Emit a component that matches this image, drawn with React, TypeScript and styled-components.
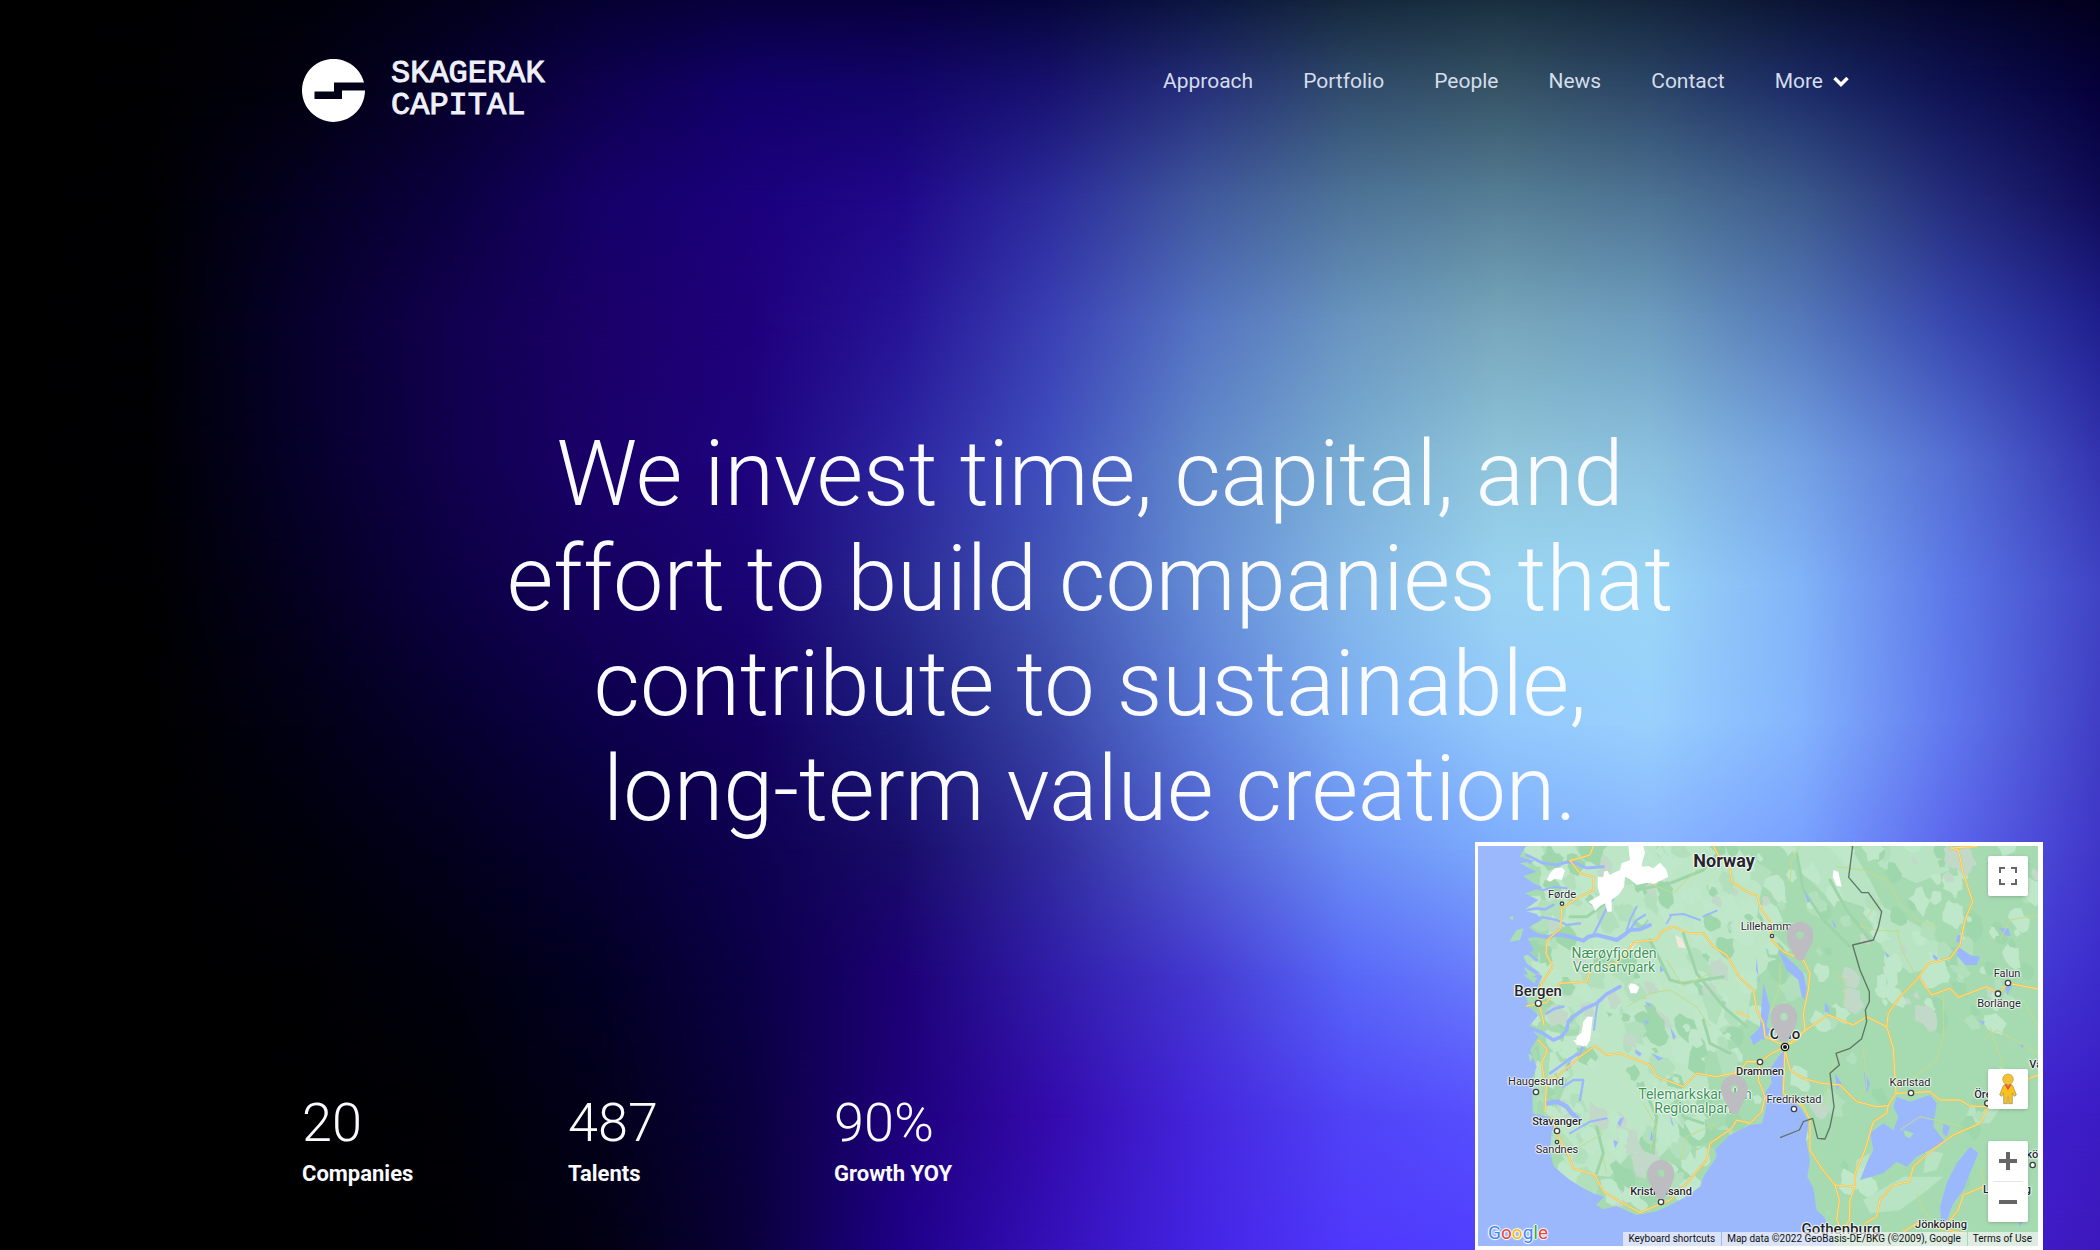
import React from 'react';
import styled, { createGlobalStyle } from 'styled-components';

const GlobalStyle = createGlobalStyle`
  *, *::before, *::after { box-sizing: border-box; }
  body {
    margin: 0;
    background: #000;
    font-family: Roboto, 'Liberation Sans', sans-serif;
  }
  h1, p, dl, dt, dd { margin: 0; }
`;

/* ---------- Aurora backdrop: rows of colour stops blended downwards ---------- */

type AuroraRow = { at: number; stops: string };

const auroraRows: AuroraRow[] = [
  { at: 0, stops: '000000 000002 00000a 02001a 050032 08003e 07003e 06063c 0c1640 15283c 1a3040 14263c 0b1434 05062c 02001c' },
  { at: 7, stops: '000000 000002 02000f 07002c 0e004e 12006a 12046a 181270 26307a 304c6c 365466 2c4668 1c2c68 0e1252 05003a' },
  { at: 16, stops: '000000 000003 050022 0b0040 150068 1b007c 20088a 2c2c9c 40599e 4e7498 567f96 4e7494 3c5a8c 242c7c 100c58' },
  { at: 26, stops: '000000 000004 07002c 11004e 1a0068 1f007c 261496 3a40b4 5574c2 6a96c0 78a8bc 6e9ec0 567abc 3848b0 202090' },
  { at: 37, stops: '000000 000004 06002a 10004c 1a006a 1e037e 2c24a0 4050be 628acc 7aaed4 90c6dc 8cc2e0 74a2e4 5570d4 3434b0' },
  { at: 47, stops: '000000 000002 050020 0c0042 15005e 1a0474 2a2a92 4256b6 648cd6 84b8e8 9ad4f2 9ad6f6 82b4f8 5c78e8 4044c4' },
  { at: 58, stops: '000000 000000 020014 06002e 0c004a 140060 1c1c7c 3844a6 5a7ad8 7caef4 92c8fc 98d0fd 84b4fe 6078ee 403ec4' },
  { at: 68, stops: '000000 000000 00000a 02001c 060034 0e0050 180c68 302c9c 5060d0 6c90f4 7cacfd 88b4ff 78a0ff 5c66ec 4036c8' },
  { at: 78, stops: '000000 000000 000003 00000e 020024 0b0046 1c0074 301ca8 4438d0 5868f8 6c80fc 6c80fc 6474f8 4c48e0 3c2ccc' },
  { at: 89, stops: '000000 000000 000001 000006 02001a 0a003e 1e007a 340aac 4426dc 5044f6 5852ff 5650ff 5040f0 4424d8 3c1cc4' },
  { at: 100, stops: '000000 000000 000000 000004 020012 0a003a 1e0088 3410b8 4424e4 5038fc 5040ff 5040ff 4c34f0 4420d4 3c18bc' },
];

const AuroraLayer = styled.div<{ $stops: string; $from: number; $to: number }>`
  position: absolute;
  inset: 0;
  background: linear-gradient(90deg, ${p => p.$stops.split(' ').map(c => `#${c}`).join(', ')});
  mask-image: ${p =>
    p.$to === 0 ? 'none' : `linear-gradient(180deg, transparent ${p.$from}%, #000 ${p.$to}%)`};
`;

const Backdrop = styled.div`
  position: absolute;
  inset: 0;
  z-index: -1;
`;

const Aurora = () => (
  <Backdrop aria-hidden="true">
    {auroraRows.map((row, i) => (
      <AuroraLayer key={row.at} $stops={row.stops} $from={i ? auroraRows[i - 1].at : 0} $to={row.at} />
    ))}
  </Backdrop>
);

/* ---------- Page frame ---------- */

const Page = styled.div`
  position: relative;
  isolation: isolate;
  overflow: hidden;
  min-height: 100vh;
  display: grid;
  grid-template-rows: auto 1fr auto;
  color: #fafbff;
`;

const Header = styled.header`
  display: flex;
  justify-content: space-between;
  align-items: flex-start;
  padding: 58px 251px 0 302px;
`;

const Brand = styled.a`
  display: flex;
  align-items: center;
  gap: 26px;
  color: #eef0fa;
  text-decoration: none;
`;

const BrandMark = styled.svg`
  display: block;
  width: 63px;
  height: 63px;
`;

const BrandName = styled.span`
  font: 400 32px/32px 'Liberation Mono', 'DejaVu Sans Mono', monospace;
  -webkit-text-stroke: 1px currentColor;
`;

const Nav = styled.nav`
  display: flex;
  gap: 50px;
  line-height: 46px;
`;

const NavLink = styled.a`
  font-size: 21px;
  color: #d5dcea;
  text-decoration: none;
`;

const MoreButton = styled.button`
  display: flex;
  align-items: center;
  gap: 10px;
  padding: 0;
  border: 0;
  background: none;
  color: #d5dcea;
  font: inherit;
  font-size: 21px;
  cursor: pointer;
`;

const Chevron = styled.svg`
  width: 16px;
  height: 12px;
  color: #fff;
`;

const Hero = styled.main`
  display: flex;
  align-items: center;
  justify-content: center;
  padding: 48px 222px 0 302px;
`;

const Headline = styled.h1`
  font-size: 90px;
  font-weight: 300;
  line-height: 105px;
  text-align: center;
`;

const Stats = styled.dl`
  display: grid;
  grid-template-columns: repeat(3, 266px);
  padding: 0 0 61px 302px;
`;

const Stat = styled.div`
  display: flex;
  flex-direction: column-reverse;
  gap: 6px;
`;

const StatLabel = styled.dt`
  font-size: 22px;
  font-weight: 700;
  line-height: 30px;
`;

const StatValue = styled.dd`
  font-size: 54px;
  font-weight: 300;
  line-height: 60px;
`;

/* ---------- Map ---------- */

const MapCard = styled.section`
  position: absolute;
  right: 57px;
  bottom: 0;
  width: 568px;
  height: 408px;
  border: solid #fff;
  border-width: 4px 5px 4px 3px;
  overflow: hidden;
  background: #a6dbb2;
  color: #202124;
`;

const MapLayer = styled.svg`
  position: absolute;
  inset: 0;
  width: 100%;
  height: 100%;
`;

type Tone = 'town' | 'city' | 'capital' | 'country' | 'park';

const toneSize: Record<Tone, number> = { town: 11, city: 11, capital: 15, country: 18, park: 14 };
const toneWeight: Record<Tone, number> = { town: 400, city: 500, capital: 500, country: 700, park: 400 };

const Place = styled.span<{ $x: number; $y: number; $tone: Tone }>`
  position: absolute;
  left: ${p => p.$x}px;
  top: ${p => p.$y}px;
  transform: translate(-50%, -50%);
  text-align: center;
  white-space: pre;
  font-size: ${p => toneSize[p.$tone]}px;
  font-weight: ${p => toneWeight[p.$tone]};
  line-height: 14px;
  color: ${p => (p.$tone === 'park' ? '#3a9556' : '#24262b')};
  text-shadow: 0 0 2px #fff, 1px 0 1px #ffffffcc, -1px 0 1px #ffffffcc, 0 1px 1px #ffffffcc, 0 -1px 1px #ffffffcc;
`;

const Controls = styled.div`
  position: absolute;
  right: 10px;
  bottom: 24px;
  display: flex;
  flex-direction: column;
  gap: 32px;
`;

const Corner = styled.div`
  position: absolute;
  right: 10px;
  top: 10px;
`;

const ControlGroup = styled.div`
  display: flex;
  flex-direction: column;
  border-radius: 2px;
  background: #fff;
  box-shadow: 0 1px 4px -1px rgba(0, 0, 0, 0.3);
`;

const ControlButton = styled.button`
  display: grid;
  place-items: center;
  width: 40px;
  height: 40px;
  padding: 0;
  border: 0;
  background: none;
  color: #666;
  cursor: pointer;
`;

const Divider = styled.span`
  height: 1px;
  margin: 0 5px;
  background: #e6e6e6;
`;

const MapFooter = styled.footer`
  position: absolute;
  right: 0;
  bottom: 0;
  display: flex;
  gap: 1px;
  font-size: 10px;
  line-height: 14px;
  color: #111;
`;

const footerCell = `
  padding: 0 6px 0 5px;
  border: 0;
  background: rgba(245, 245, 245, 0.7);
  color: inherit;
  font: inherit;
  text-decoration: none;
  white-space: nowrap;
`;
const FooterButton = styled.button`${footerCell}`;
const FooterNote = styled.span`${footerCell}`;
const FooterLink = styled.a`${footerCell}`;

const GoogleMark = styled.a`
  position: absolute;
  left: 10px;
  bottom: 3px;
  font: 400 19px/20px Roboto, sans-serif;
  text-decoration: none;
  text-shadow: 0 0 1px #fff, 1px 0 1px #fff, -1px 0 1px #fff, 0 1px 1px #fff, 0 -1px 1px #fff;
`;

const Letter = styled.span<{ $color: string }>`
  color: ${p => p.$color};
`;

const places: { name: string; x: number; y: number; tone: Tone }[] = [
  { name: 'Norway', x: 246, y: 15, tone: 'country' },
  { name: 'Førde', x: 84, y: 49, tone: 'town' },
  { name: 'Nærøyfjorden\nVerdsarvpark', x: 136, y: 114, tone: 'park' },
  { name: 'Bergen', x: 60, y: 145, tone: 'capital' },
  { name: 'Lillehammer', x: 293, y: 81, tone: 'town' },
  { name: 'Oslo', x: 307, y: 188, tone: 'capital' },
  { name: 'Falun', x: 529, y: 128, tone: 'town' },
  { name: 'Borlänge', x: 521, y: 158, tone: 'town' },
  { name: 'Drammen', x: 282, y: 226, tone: 'city' },
  { name: 'Fredrikstad', x: 316, y: 254, tone: 'town' },
  { name: 'Haugesund', x: 58, y: 236, tone: 'town' },
  { name: 'Stavanger', x: 79, y: 276, tone: 'city' },
  { name: 'Sandnes', x: 79, y: 304, tone: 'town' },
  { name: 'Telemarkskanalen\nRegionalpark', x: 217, y: 255, tone: 'park' },
  { name: 'Kristiansand', x: 183, y: 346, tone: 'city' },
  { name: 'Karlstad', x: 432, y: 237, tone: 'town' },
  { name: 'Örebro', x: 513, y: 249, tone: 'city' },
  { name: 'Västerås', x: 573, y: 219, tone: 'city' },
  { name: 'Norrköping', x: 554, y: 309, tone: 'city' },
  { name: 'Linköping', x: 529, y: 344, tone: 'city' },
  { name: 'Jönköping', x: 463, y: 379, tone: 'city' },
  { name: 'Gothenburg', x: 363, y: 383, tone: 'capital' },
];

const townDots: [number, number, number][] = [
  [276, 191, 5], [205, 490, 9], [906, 288, 5], [1614, 429, 8], [1584, 461, 8], [870, 666, 8],
  [972, 807, 8], [198, 756, 8], [261, 873, 8], [261, 906, 5], [573, 1086, 8], [1323, 759, 8],
  [1552, 790, 8], [1688, 975, 8],
];

const roads = [
  '370,18 360,45 300,62 330,100 370,110 370,150 330,170 275,205 272,265 232,300 228,340 248,380 215,430 205,490 170,498',
  '205,490 230,488 270,430 350,425 365,380 440,370 495,305 560,300 575,275 610,260 660,280 700,280 730,320 770,345 810,415 850,450 860,510 880,550 885,590 945,618',
  '730,18 745,45 780,85 785,125 830,155 860,165 875,210 900,245 905,300 940,335 1000,360 1020,400 1015,450 1000,520 1005,570 980,600 945,620',
  '945,620 1000,575 1075,525 1150,555 1190,530 1250,560 1255,520 1290,470 1340,420 1375,370 1440,355 1470,315 1485,240 1508,185 1480,100 1465,30 1440,24 1520,20',
  '1350,415 1385,465 1440,445 1465,472 1550,440 1585,460 1615,430 1704,447',
  '1250,560 1270,625 1278,760 1255,795 1250,820 1210,845 1185,930 1155,1000 1155,1040 1140,1080 1138,1140 1115,1175',
  '945,630 960,690 1000,715 1055,730 1110,735 1160,785 1220,800 1255,797',
  '1278,760 1380,755 1410,780 1470,780 1500,798 1555,800 1530,850 1450,885 1380,935 1330,980 1318,1025 1270,1035 1230,1080 1220,1130 1185,1150',
  '945,630 940,760 1000,800 1020,840 1020,930 1055,985 1095,1035 1108,1080 1100,1140 1115,1170',
  '1095,1035 1155,1040',
  '1540,1040 1480,1065 1465,1110 1440,1140',
  '1555,800 1620,740 1704,705',
  '840,665 870,665 905,640 945,620',
  '870,665 865,720 885,770 875,815 840,850 800,840 785,865 720,910 710,960 650,1030 600,1080 510,1118 460,1090 400,1055 375,1005 310,985 295,945 260,880 245,830',
  '225,815 230,720 260,710 330,650 375,618 410,645 450,640 540,675 560,710 640,740 680,700 740,710 810,695 830,665 865,665',
  '205,600 232,630 215,670 225,730',
  '205,490 215,520 222,555',
  '1300,1176 1340,1150 1480,1180',
  '800,515 835,530',
];

const minorRoads = [
  '960,130 965,60 990,18', '1100,80 1180,90 1250,120 1290,190 1340,240 1400,260',
  '1280,270 1300,340 1340,410', '1590,300 1620,240 1704,225', '1420,460 1420,590 1400,660 1280,750',
  '930,370 930,440 900,520', '1090,400 1130,420 1120,500', '1230,180 1170,260 1220,270 1290,275',
  '470,500 540,460 600,450 680,500 720,560', '540,130 610,160 700,70', '260,930 330,920 400,880',
  '630,960 650,890 740,850', '400,950 410,1000', '1560,560 1600,680 1580,760', '1110,640 1080,700 1060,800',
  '1290,870 1350,830 1480,860', '1340,1060 1360,1110 1420,1180', '1530,980 1550,1060', '1180,620 1190,740 1160,790',
  '590,360 640,440 720,400', '520,790 560,860 540,930', '1660,480 1704,560', '1540,600 1580,570 1704,640',
];

const fjords: [number, string][] = [
  [12, '130,280 165,290 200,285 235,292 260,283 300,290 340,302 355,290 380,285 410,292 440,300 462,285 480,270 510,268 540,255'],
  [7, '370,285 385,255 400,225 412,200 430,175'], [6, '470,270 482,235 500,200'], [7, '480,270 500,240 525,225'],
  [9, '170,45 215,68 260,75 290,66 320,70 350,84 400,80'], [6, '150,120 190,142 220,150 255,140 290,145'], [8, '120,200 160,212 200,205 225,208 250,195'],
  [7, '180,235 220,232 260,240 290,255 330,250'], [11, '170,560 210,575 250,600 275,590 290,570 295,545 310,530 345,505 380,490 410,462 450,440'],
  [6, '385,480 378,520 372,570'], [12, '170,380 188,402 210,410 200,430 190,450'], [9, '150,330 175,340 200,360'], [8, '230,520 255,505 280,500'],
  [14, '230,790 262,785 290,800 305,820 330,840'], [6, '300,880 330,862 360,845 410,835'], [8, '240,700 275,675 300,655 330,640 350,590'],
  [7, '280,740 310,720 340,720 330,780'], [6, '290,690 300,660 320,640'], [6, '600,225 640,222 690,240'],
  [6, '700,230 740,212'], [5, '590,250 605,225'],
];

const lakes = [
  '1280,770 1320,785 1380,765 1400,790 1390,860 1425,905 1380,930 1340,950 1310,980 1280,965 1240,1000 1170,1020 1190,970 1210,930 1200,880 1240,850 1270,870 1285,830 1270,800',
  '1500,920 1525,940 1500,1000 1480,1050 1450,1090 1430,1140 1415,1160 1410,1100 1430,1030 1460,970',
  '1465,320 1500,345 1530,350 1520,375 1485,375 1460,345',
  '925,330 970,370 1000,400 1010,440 1005,480 995,470 985,420 950,390',
  '1462,285 1472,285 1468,312 1458,305', '1590,265 1615,265 1622,288 1604,286', '1390,342 1405,355 1398,362 1388,352',
  '1085,235 1100,262 1092,262', '1245,335 1260,350 1250,352', '1420,850 1440,860 1430,890 1418,880',
  '1604,440 1628,436 1612,465', '880,430 900,500 890,560 905,570 880,600 850,590 870,560', '1065,485 1075,500 1078,520 1064,515',
  '496,628 515,640 510,650 496,640', '545,640 580,655 565,662', '450,835 462,832 450,860 442,850', '430,900 445,905 435,925',
  '860,350 866,420 872,430 858,390', '1005,150 1020,185 1012,188', '840,590 870,565 872,600 850,615',
  '1095,700 1115,730 1100,750', '1180,690 1200,730 1190,760', '1600,1000 1660,1010 1650,1040 1610,1030', '1525,540 1545,545 1540,555',
  '600,560 618,590 610,600', '525,485 545,492 535,500', '520,540 538,545 530,556', '545,870 552,905 540,900', '600,820 612,860 604,850',
  '1640,1120 1670,1120 1650,1160', '1650,612 1665,615 1655,625', '570,375 582,392 570,396',
];

const snow = [
  '475,18 520,18 525,40 518,60 515,80 535,78 550,85 570,68 588,88 595,110 572,122 550,132 530,128 500,135 480,118 465,110 462,140 448,162 425,180 425,215 412,215 405,190 390,198 375,213 368,195 355,185 372,176 390,165 383,140 383,110 400,112 402,95 412,92 420,105 432,98 450,90 455,70 480,60',
  '230,120 240,100 255,85 275,82 285,92 275,120 255,116 240,125', '340,545 352,530 368,530 364,570 360,600 340,620 318,608 320,590 334,578',
  '475,438 482,430 495,432 508,442 500,460 482,460', '1090,90 1105,95 1115,140 1100,138 1088,110', '310,600 360,600 350,618 320,614',
];

/* Scattered clearings that give the land its mottled relief. */
const clearings = (() => {
  let seed = 41;
  const rnd = () => {
    seed = (seed * 16807) % 2147483647;
    return seed / 2147483647;
  };
  return Array.from({ length: 460 }, (_, i) => {
    const west = rnd() < 0.7;
    const cx = west ? 180 + rnd() * 640 : 820 + rnd() * 880;
    const cy = west ? rnd() * 1080 : rnd() * (rnd() < 0.7 ? 560 : 1180);
    const size = 10 + rnd() * 32;
    const points = Array.from({ length: 11 }, (_, k) => {
      const a = (k / 11) * Math.PI * 2;
      const r = size * (0.6 + rnd() * 0.6);
      const u = Math.cos(a) * r * 0.9;
      const v = Math.sin(a) * r * 1.1;
      return `${Math.round(cx + u + v * 0.3)},${Math.round(cy + v - u * 0.1)}`;
    }).join(' ');
    const fill = i % 11 === 0 ? '#c2d8c8' : i % 4 === 0 ? '#9fd7ac' : i % 3 === 0 ? '#b2e0bd' : '#bfe7c9';
    return { points, fill };
  });
})();

const pins: [number, number][] = [[990, 285], [942, 530], [793, 745], [573, 1000]];

const MapArt = () => (
  <MapLayer viewBox="24 18 1680 1200" aria-hidden="true">
    <rect x="24" y="18" width="1680" height="1200" fill="#a6dbb2" />
    <path fill="#bde6c7" d="M200 18H800L880 120 860 230 960 330 850 420 830 540 700 640 720 760 660 860 560 960 480 940 420 1010 300 1000 240 860 300 700 330 560 200 420 240 260Z" />
    <path fill="#b8e4c3" d="M960 18H1140L1200 120 1240 200 1350 260 1420 320 1400 380 1320 400 1240 330 1180 200 1060 160 1000 100ZM1200 18H1400L1440 90 1340 130 1230 80ZM1160 960 1200 940 1180 1010 1150 1030ZM1370 930 1420 940 1400 990 1360 1000ZM1180 1080 1300 1010 1420 1010 1360 1060 1290 1110 1200 1120ZM1500 800 1600 790 1560 850 1480 850Z" />
    {clearings.map((c, i) => <polygon key={i} points={c.points} fill={c.fill} />)}
    <g fill="none" stroke="#9dd5a9" strokeWidth="9" strokeLinecap="round" strokeLinejoin="round">
      <path d="M540 300 600 420 640 430 760 410M640 280 680 400 760 500 830 560M700 540 720 610 780 640M420 180 350 230 300 230M500 150 600 130 700 90 760 20M520 740 560 830 550 920M620 760 640 830 700 850M380 860 400 940 380 1000M980 40 1000 150 1060 240 1140 320M1080 120 1130 210 1200 300" />
    </g>
    <g fill="#9cb8fd">
      <path d="M24 18H168L148 50 192 62 168 80 200 95 160 108 190 130 218 142 165 160 205 180 160 212 200 222 215 240 176 262 205 282 172 292 192 330 160 350 172 372 212 400 160 404 205 440 166 462 176 500 205 525 176 560 205 590 180 630 200 680 186 720 190 820 232 830 256 850 244 880 240 940 252 980 300 1020 340 1045 375 1062 402 1070 378 1095 400 1108 440 1098 500 1126 560 1114 590 1100 640 1075 690 1040 700 1010 740 950 735 930 780 885 840 855 876 850 888 800 884 760 905 730 898 690 925 650 942 632 950 655 938 700 936 765 990 800 1016 845 1008 900 1020 960 1012 1010 1030 1045 1040 1110 1062 1130 1076 1160 1096 1218H24Z" />
      {lakes.map((points, i) => <polygon key={i} points={points} />)}
    </g>
    <g fill="none" stroke="#9cb8fd" strokeLinecap="round" strokeLinejoin="round">
      {fjords.map(([width, points], i) => <polyline key={i} points={points} strokeWidth={width} />)}
    </g>
    <path fill="#aadfb5" d="M118 305 140 270 160 265 150 300ZM118 232 130 228 128 242ZM175 640 190 650 180 665ZM188 750 200 745 202 825 188 820ZM205 600 240 640 232 760 222 820 215 700ZM240 770 262 760 255 780ZM150 70 175 66 178 84ZM160 380 200 405 180 412ZM1070 1110 1085 1118 1072 1128ZM1300 870 1330 880 1320 895 1305 888Z" />
    {snow.map((points, i) => <polygon key={i} points={points} fill="#fff" />)}
    <path fill="#f1e9dc" d="M615 285 635 295 648 325 625 322ZM480 312 500 305 485 330Z" />
    <g fill="none" stroke="#c3dc8b" strokeWidth="3" strokeLinejoin="round">
      {minorRoads.map((points, i) => <polyline key={i} points={points} />)}
    </g>
    <g fill="none" strokeLinejoin="round" strokeLinecap="round">
      {roads.map((points, i) => <polyline key={i} points={points} stroke="#f3c24d" strokeWidth="6" />)}
      {roads.map((points, i) => <polyline key={i} points={points} stroke="#fbe08d" strokeWidth="3" />)}
    </g>
    <path fill="none" stroke="#5d7564" strokeWidth="4" strokeLinejoin="round" d="M1148 18 1136 112 1175 158 1195 158 1235 215 1225 262 1210 300 1148 315 1170 390 1198 455 1198 485 1186 510 1190 545 1175 596 1140 625 1098 640 1108 675 1080 700 1092 800 1080 860 1065 897 1043 895 1028 835 1000 845 988 870 930 893" />
    {townDots.map(([x, y, r], i) => (
      <circle key={i} cx={x} cy={y} r={r} fill="#fff" stroke="#3c4043" strokeWidth="4" />
    ))}
    <circle cx="945" cy="621" r="11" fill="#fff" stroke="#111" strokeWidth="4" />
    <circle cx="945" cy="621" r="6" fill="#111" />
  </MapLayer>
);

const MapPins = () => (
  <MapLayer viewBox="24 18 1680 1200" aria-hidden="true">
    {pins.map(([x, y]) => (
      <g key={x} transform={`translate(${x} ${y})`}>
        <path fill="#bdbdc1" fillRule="evenodd" d="M0-40A40 40 0 0 1 40 0C40 32 20 48 14 70Q0 86-14 70C-20 48-40 32-40 0A40 40 0 0 1 0-40ZM0-11A11 11 0 1 0 0 11A11 11 0 1 0 0-11Z" />
      </g>
    ))}
  </MapLayer>
);

const Pegman = () => (
  <svg width="18" height="32" viewBox="0 0 54 96" aria-hidden="true">
    <path d="M12 40Q14 34 22 34H32Q40 34 42 40L52 66 46 70 40 60V92H29V72H25V92H14V60L8 70 2 66Z" fill="#fbc21d" stroke="#9b8a5a" strokeWidth="2" />
    <circle cx="27" cy="19" r="16" fill="#f2c230" stroke="#b99a4a" strokeWidth="2" />
    <path d="M17 35 27 52 37 35 32 34 27 40 22 34Z" fill="#e5533d" />
  </svg>
);

const googleLetters: [string, string][] = [
  ['G', '#4285f4'], ['o', '#ea4335'], ['o', '#fbbc05'], ['g', '#4285f4'], ['l', '#34a853'], ['e', '#ea4335'],
];

const OfficeMap = () => (
  <MapCard aria-label="Map of Norway">
    <MapArt />
    {places.map(p => (
      <Place key={p.name} $x={p.x} $y={p.y} $tone={p.tone}>{p.name}</Place>
    ))}
    <MapPins />
    <GoogleMark href="#google">
      {googleLetters.map(([letter, color], i) => <Letter key={i} $color={color}>{letter}</Letter>)}
    </GoogleMark>
    <MapFooter>
      <FooterButton type="button">Keyboard shortcuts</FooterButton>
      <FooterNote>Map data ©2022 GeoBasis-DE/BKG (©2009), Google</FooterNote>
      <FooterLink href="#terms">Terms of Use</FooterLink>
    </MapFooter>
    <Corner>
      <ControlGroup>
        <ControlButton type="button" aria-label="Toggle fullscreen view">
          <svg width="18" height="18" viewBox="0 0 18 18" fill="none" stroke="currentColor" strokeWidth="2" aria-hidden="true">
            <path d="M1 6V1H6M12 1H17V6M17 12V17H12M6 17H1V12" />
          </svg>
        </ControlButton>
      </ControlGroup>
    </Corner>
    <Controls>
      <ControlGroup>
        <ControlButton type="button" aria-label="Street View"><Pegman /></ControlButton>
      </ControlGroup>
      <ControlGroup>
        <ControlButton type="button" aria-label="Zoom in">
          <svg width="18" height="18" viewBox="0 0 18 18" fill="currentColor" aria-hidden="true">
            <path d="M7 0H11V7H18V11H11V18H7V11H0V7H7Z" />
          </svg>
        </ControlButton>
        <Divider />
        <ControlButton type="button" aria-label="Zoom out">
          <svg width="18" height="18" viewBox="0 0 18 18" fill="currentColor" aria-hidden="true">
            <path d="M0 7H18V11H0Z" />
          </svg>
        </ControlButton>
      </ControlGroup>
    </Controls>
  </MapCard>
);

/* ---------- App ---------- */

const navItems = ['Approach', 'Portfolio', 'People', 'News', 'Contact'];
const stats = [
  { value: '20', label: 'Companies' },
  { value: '487', label: 'Talents' },
  { value: '90%', label: 'Growth YOY' },
];

export default function App() {
  return (
    <Page>
      <GlobalStyle />
      <Aurora />
      <Header>
        <Brand href="#home">
          <BrandMark viewBox="0 0 126 126" aria-hidden="true">
            <path fill="#fff" d="M124 47A63 63 0 1 0 126 63H80V80H25V65H64V47Z" />
          </BrandMark>
          <BrandName>
            SKAGERAK<br />
            CAPITAL
          </BrandName>
        </Brand>
        <Nav aria-label="Main">
          {navItems.map(item => (
            <NavLink key={item} href={`#${item.toLowerCase()}`}>{item}</NavLink>
          ))}
          <MoreButton type="button">
            More
            <Chevron viewBox="0 0 32 24" fill="none" stroke="currentColor" strokeWidth="7" aria-hidden="true">
              <path d="M3 6 16 19 29 6" />
            </Chevron>
          </MoreButton>
        </Nav>
      </Header>
      <Hero>
        <Headline>
          We invest time, capital, and<br />
          effort to build companies that<br />
          contribute to sustainable,<br />
          long-term value creation.
        </Headline>
      </Hero>
      <Stats>
        {stats.map(s => (
          <Stat key={s.label}>
            <StatLabel>{s.label}</StatLabel>
            <StatValue>{s.value}</StatValue>
          </Stat>
        ))}
      </Stats>
      <OfficeMap />
    </Page>
  );
}
